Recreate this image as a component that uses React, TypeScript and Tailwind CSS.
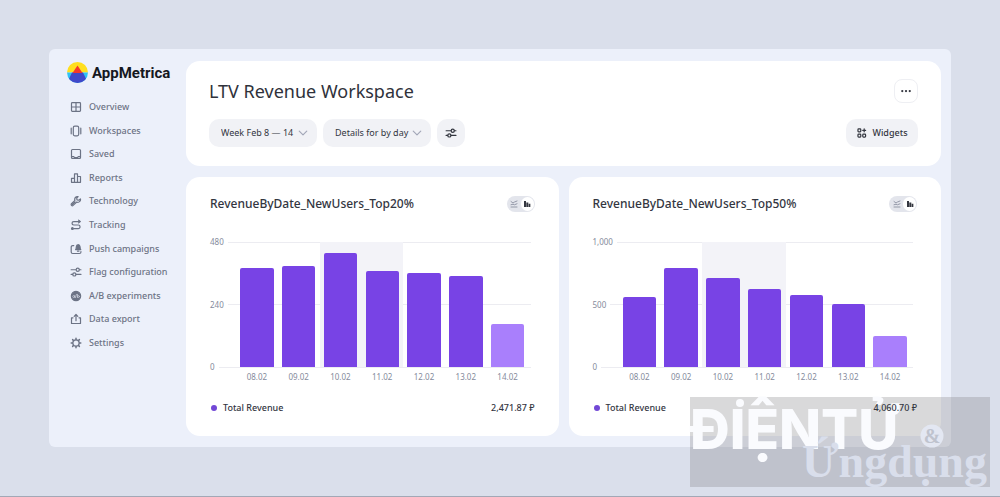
import React, { useState } from 'react';

type IconProps = { children: React.ReactNode; className?: string };

function Icon({ children, className = 'size-3' }: IconProps) {
  return (
    <svg
      viewBox="0 0 16 16"
      className={`shrink-0 ${className}`}
      fill="none"
      stroke="currentColor"
      strokeWidth="1.6"
      strokeLinecap="round"
      strokeLinejoin="round"
      aria-hidden="true"
    >
      {children}
    </svg>
  );
}

const slidersPaths = (
  <>
    <path d="M1.5 5h6.5M12.6 5h2M1.5 11.2h2M8.2 11.2h6.4" />
    <circle cx="10.3" cy="5" r="2.1" />
    <circle cx="5.8" cy="11.2" r="2.1" />
  </>
);

const navItems = [
  {
    label: 'Overview',
    icon: (
      <>
        <rect x="2" y="2.2" width="12" height="11.6" rx="1" />
        <path d="M8 2.2v11.6M2 8h12" />
      </>
    ),
  },
  {
    label: 'Workspaces',
    icon: (
      <>
        <rect x="4.4" y="1.6" width="7.2" height="12.8" rx="2" />
        <path d="M1.6 4.2v7.6M14.4 4.2v7.6" />
      </>
    ),
  },
  {
    label: 'Saved',
    icon: (
      <>
        <rect x="2" y="2" width="12" height="12" rx="1.2" />
        <path d="M2.4 11.6H5l1 1.2h4l1-1.2h2.6" />
      </>
    ),
  },
  {
    label: 'Reports',
    icon: <path d="M2 13.8V8.4h4v5.4zM6 13.8V2.6h4v11.2zM10 13.8V6h4v7.8z" />,
  },
  {
    label: 'Technology',
    icon: (
      <>
        <path d="M10.8 2.2a3.6 3.6 0 0 0-4.2 4.9L2 11.6a1.5 1.5 0 0 0 2.2 2.2L9 9.4a3.6 3.6 0 0 0 4.9-4.2L11.6 7 9.3 6.6 9 4.3z" />
        <path d="M3.2 12.6 6.6 9.3" strokeWidth="2" />
      </>
    ),
  },
  {
    label: 'Tracking',
    icon: (
      <>
        <path d="M12.5 3.4H5a2.3 2.3 0 0 0 0 4.6h6a2.4 2.4 0 0 1 0 4.8H5" />
        <path d="m11.8 1.4 2.6 2-2.6 2z" fill="currentColor" strokeWidth="1" />
        <circle cx="3.2" cy="12.8" r="1.2" fill="currentColor" />
      </>
    ),
  },
  {
    label: 'Push campaigns',
    icon: (
      <>
        <path d="M5 3.4H3.6a2 2 0 0 0-2 2V12a2 2 0 0 0 2 2h9a2 2 0 0 0 2-2v-.6" />
        <path
          d="M7.4 8.8c1-.8.8-2 1-3.6.2-1.8 1-3 2.5-3s2.300 1.200 2.500 3c.2 1.600 0 2.800 1 3.600z"
          fill="currentColor"
        />
        <path d="M10 10.9h1.8" />
      </>
    ),
  },
  { label: 'Flag configuration', icon: slidersPaths },
  {
    label: 'A/B experiments',
    icon: (
      <>
        <circle cx="8" cy="8" r="6.2" fill="currentColor" />
        <g stroke="#c9cedb" strokeWidth="1">
          <circle cx="4.9" cy="8.7" r="1.3" />
          <path d="M6.3 7.4V10M7.4 10.2l1.2-4.4M10 5.8V10" />
          <circle cx="11.3" cy="8.7" r="1.3" />
        </g>
      </>
    ),
  },
  {
    label: 'Data export',
    icon: (
      <>
        <path d="M4 6.4H2V14h12V6.4h-2" />
        <path d="M8 10.2V2.2M5.6 4.4 8 2l2.4 2.4" />
      </>
    ),
  },
  {
    label: 'Settings',
    icon: (
      <>
        <circle cx="8" cy="8" r="4.2" />
        <path
          d="M8 1.6v2M8 12.4v2M1.6 8h2M12.4 8h2M3.5 3.5l1.4 1.4M11.1 11.1l1.4 1.4M12.5 3.5l-1.4 1.4M4.9 11.1l-1.4 1.4"
          strokeWidth="2"
        />
      </>
    ),
  },
];

type Chart = {
  title: string;
  max: number;
  ticks: string[];
  values: number[];
  total: string;
};

const days = ['08.02', '09.02', '10.02', '11.02', '12.02', '13.02', '14.02'];
// 10.02 and 11.02 are shaded as the weekend
const shadedDays = [2, 3];

const charts: Chart[] = [
  {
    title: 'RevenueByDate_NewUsers_Top20%',
    max: 480,
    ticks: ['480', '240', '0'],
    values: [380, 388, 436, 370, 360, 350, 164],
    total: '2,471.87 ₽',
  },
  {
    title: 'RevenueByDate_NewUsers_Top50%',
    max: 1000,
    ticks: ['1,000', '500', '0'],
    values: [560, 792, 714, 624, 574, 504, 248],
    total: '4,060.70 ₽',
  },
];

function Logo() {
  return (
    <a href="#home" className="flex items-center gap-1 text-[#15181f]">
      <svg viewBox="0 0 42 42" className="size-[21px] shrink-0" aria-hidden="true">
        <defs>
          <clipPath id="logo-circle">
            <circle cx="21" cy="21" r="21" />
          </clipPath>
        </defs>
        <g clipPath="url(#logo-circle)">
          <rect width="42" height="21" fill="#ffdf1f" />
          <rect y="21" width="42" height="21" fill="#2fc3f5" />
          <path d="M10 21h22l10 21H0z" fill="#4048c9" />
          <path d="M21 7 31 22H11z" fill="#f5382c" />
        </g>
      </svg>
      <span className="font-[Roboto] text-[15px] leading-5 font-bold">AppMetrica</span>
    </a>
  );
}

function Sidebar() {
  return (
    <aside className="flex w-[137px] shrink-0 flex-col gap-4 pt-[13px] pb-24 pl-[18px]">
      <Logo />
      <nav className="flex flex-1 flex-col justify-between pl-[3px]">
        {navItems.map((item) => (
          <a
            key={item.label}
            href="#"
            className="flex items-center gap-[7px] text-[9px] leading-4 font-medium whitespace-nowrap text-[#6c7385]"
          >
            <Icon>{item.icon}</Icon>
            {item.label}
          </a>
        ))}
      </nav>
    </aside>
  );
}

function Dropdown({ label, value }: { label: string; value: string }) {
  return (
    <div className="grid w-27 items-center rounded-[10px] bg-[#f1f2f6]">
      <select
        aria-label={label}
        className="col-start-1 row-start-1 h-7 w-full appearance-none rounded-[10px] bg-transparent pl-3 text-[9px] font-normal text-[#33363f]"
      >
        <option>{value}</option>
      </select>
      <Icon className="pointer-events-none col-start-1 row-start-1 mr-2 size-3 justify-self-end text-[#a3a7b8]">
        <path d="m3 5.5 5 5 5-5" />
      </Icon>
    </div>
  );
}

function Header() {
  return (
    <header className="flex flex-col gap-4 rounded-[14px] bg-white pt-[18px] pr-[23px] pb-[19px] pl-[23px]">
      <div className="flex items-center justify-between">
        <h1 className="text-[18px] leading-6 font-normal text-[#2f323b]">LTV Revenue Workspace</h1>
        <button
          aria-label="More"
          className="flex size-6 items-center justify-center rounded-lg border border-[#eeeff3] text-[#33363f]"
        >
          <Icon>
            <g fill="currentColor" stroke="none">
              <circle cx="3" cy="8" r="1.5" />
              <circle cx="8" cy="8" r="1.5" />
              <circle cx="13" cy="8" r="1.5" />
            </g>
          </Icon>
        </button>
      </div>
      <div className="flex gap-1.5">
        <Dropdown label="Period" value="Week Feb 8 — 14" />
        <Dropdown label="Details" value="Details for by day" />
        <button
          aria-label="Filters"
          className="flex size-7 items-center justify-center rounded-[10px] bg-[#f1f2f6] text-[#33363f]"
        >
          <Icon>{slidersPaths}</Icon>
        </button>
        <button className="ml-auto flex h-7 w-18 items-center justify-center gap-1 rounded-[10px] bg-[#f1f2f6] text-[9px] font-medium text-[#33363f]">
          <Icon>
            <rect x="2.6" y="2.6" width="3.8" height="3.8" rx="1" />
            <rect x="2.6" y="9.6" width="3.8" height="3.8" rx="1" />
            <rect x="9" y="9.6" width="3.8" height="3.8" rx="1" />
            <path d="M10.9 2.6v3.8M9 4.5h3.8" />
          </Icon>
          Widgets
        </button>
      </div>
    </header>
  );
}

function ViewToggle() {
  const [view, setView] = useState<'lines' | 'bars'>('bars');

  const active = 'bg-white text-[#33363f]';
  const idle = 'text-[#8b90a0]';

  return (
    <div className="flex h-4 w-7 items-center rounded-full bg-[#e3e5ec] px-px">
      <button
        aria-label="Line view"
        aria-pressed={view === 'lines'}
        onClick={() => setView('lines')}
        className={`flex h-3.5 flex-1 items-center justify-center rounded-full ${view === 'lines' ? active : idle}`}
      >
        <Icon className="size-2">
          <path d="M2 3l4 3 3-2 5-2M2 9.5l4-1 3 1 5-2M2 14h12" strokeWidth="1.8" />
        </Icon>
      </button>
      <button
        aria-label="Bar view"
        aria-pressed={view === 'bars'}
        onClick={() => setView('bars')}
        className={`flex h-3.5 flex-1 items-center justify-center rounded-full ${view === 'bars' ? active : idle}`}
      >
        <Icon className="size-2">
          <g fill="currentColor" stroke="none">
            <rect x="2" y="2" width="4" height="12" />
            <rect x="6.6" y="5" width="4" height="9" />
            <rect x="11.2" y="7.5" width="3.5" height="6.5" />
          </g>
        </Icon>
      </button>
    </div>
  );
}

function ChartCard({ chart }: { chart: Chart }) {
  return (
    <section className="flex flex-col rounded-[14px] bg-white px-6 pt-[18px] pb-[19px]">
      <div className="flex items-center justify-between">
        <h2 className="text-[12px] leading-[18px] font-medium text-[#33363f]">{chart.title}</h2>
        <ViewToggle />
      </div>

      {/* grid lines and bars share one cell */}
      <div className="mt-[23px] grid">
        <div className="col-start-1 row-start-1 mr-1 flex h-[137px] flex-col justify-between">
          {chart.ticks.map((tick) => (
            <div key={tick} className="flex items-center gap-1 text-[8px] leading-3 text-[#858b9c]">
              {tick}
              <span className="h-px flex-1 bg-[#ececf1]" />
            </div>
          ))}
        </div>
        <div className="z-0 col-start-1 row-start-1 mt-1.5 mr-1.5 ml-[26px] flex">
          {days.map((day, i) => (
            <div key={day} className="flex flex-1 flex-col">
              <div
                className={`flex h-[125px] items-end justify-center ${shadedDays.includes(i) ? 'bg-[#f3f3f8]' : ''}`}
              >
                <div
                  className={`w-4/5 rounded-t-[2px] ${i === days.length - 1 ? 'bg-[#a97ffc]' : 'bg-[#7843e5]'}`}
                  style={{ height: `${(chart.values[i] / chart.max) * 100}%` }}
                />
              </div>
              <span className="mt-1 text-center text-[8px] leading-3 text-[#858b9c]">{day}</span>
            </div>
          ))}
        </div>
      </div>

      <div className="mt-4 flex items-center gap-1.5 text-[9px] leading-[18px] font-medium text-[#33363f]">
        <span className="ml-px size-1.5 rounded-full bg-[#7248d6]" />
        Total Revenue
        <span className="z-20 ml-auto">{chart.total}</span>
      </div>
    </section>
  );
}

function Watermark() {
  return (
    <svg
      viewBox="0 0 300 90"
      className="pointer-events-none absolute right-2.5 bottom-[9px] z-10 h-[90px] w-[300px] overflow-visible"
    >
      <rect width="300" height="90" fill="#808084" fillOpacity="0.3" />
      <circle cx="50" cy="6" r="4" fill="#fafbfe" />
      <text x="0" y="52" fontFamily="Inter, sans-serif" fontWeight="800" fontSize="55" fill="#fafbfe">
        ĐIỆNTỬ
      </text>
      <text
        x="112"
        y="80"
        fontFamily="'Liberation Serif', serif"
        fontWeight="700"
        fontSize="46"
        fill="#d9deeb"
      >
        Ứngdụng
      </text>
      <circle cx="242" cy="39" r="11.5" fill="#e3e7f2" />
      <text
        x="242"
        y="46"
        textAnchor="middle"
        fontFamily="'Liberation Serif', serif"
        fontWeight="700"
        fontSize="20"
        fill="#bfc3ce"
      >
        &amp;
      </text>
    </svg>
  );
}

export default function App() {
  return (
    <div className="relative min-h-screen border-b border-[#a2a8b6] bg-[#dadfeb] px-[49px] pt-[49px] pb-12 font-['Noto_Sans',sans-serif]">
      <div className="flex rounded-md bg-[#ecf0fa]">
        <Sidebar />
        <main className="flex min-w-0 flex-1 flex-col gap-[11px] pt-3 pr-2.5 pb-[11px]">
          <Header />
          <div className="grid grid-cols-2 gap-2.5">
            {charts.map((chart) => (
              <ChartCard key={chart.title} chart={chart} />
            ))}
          </div>
        </main>
      </div>
      <Watermark />
    </div>
  );
}
